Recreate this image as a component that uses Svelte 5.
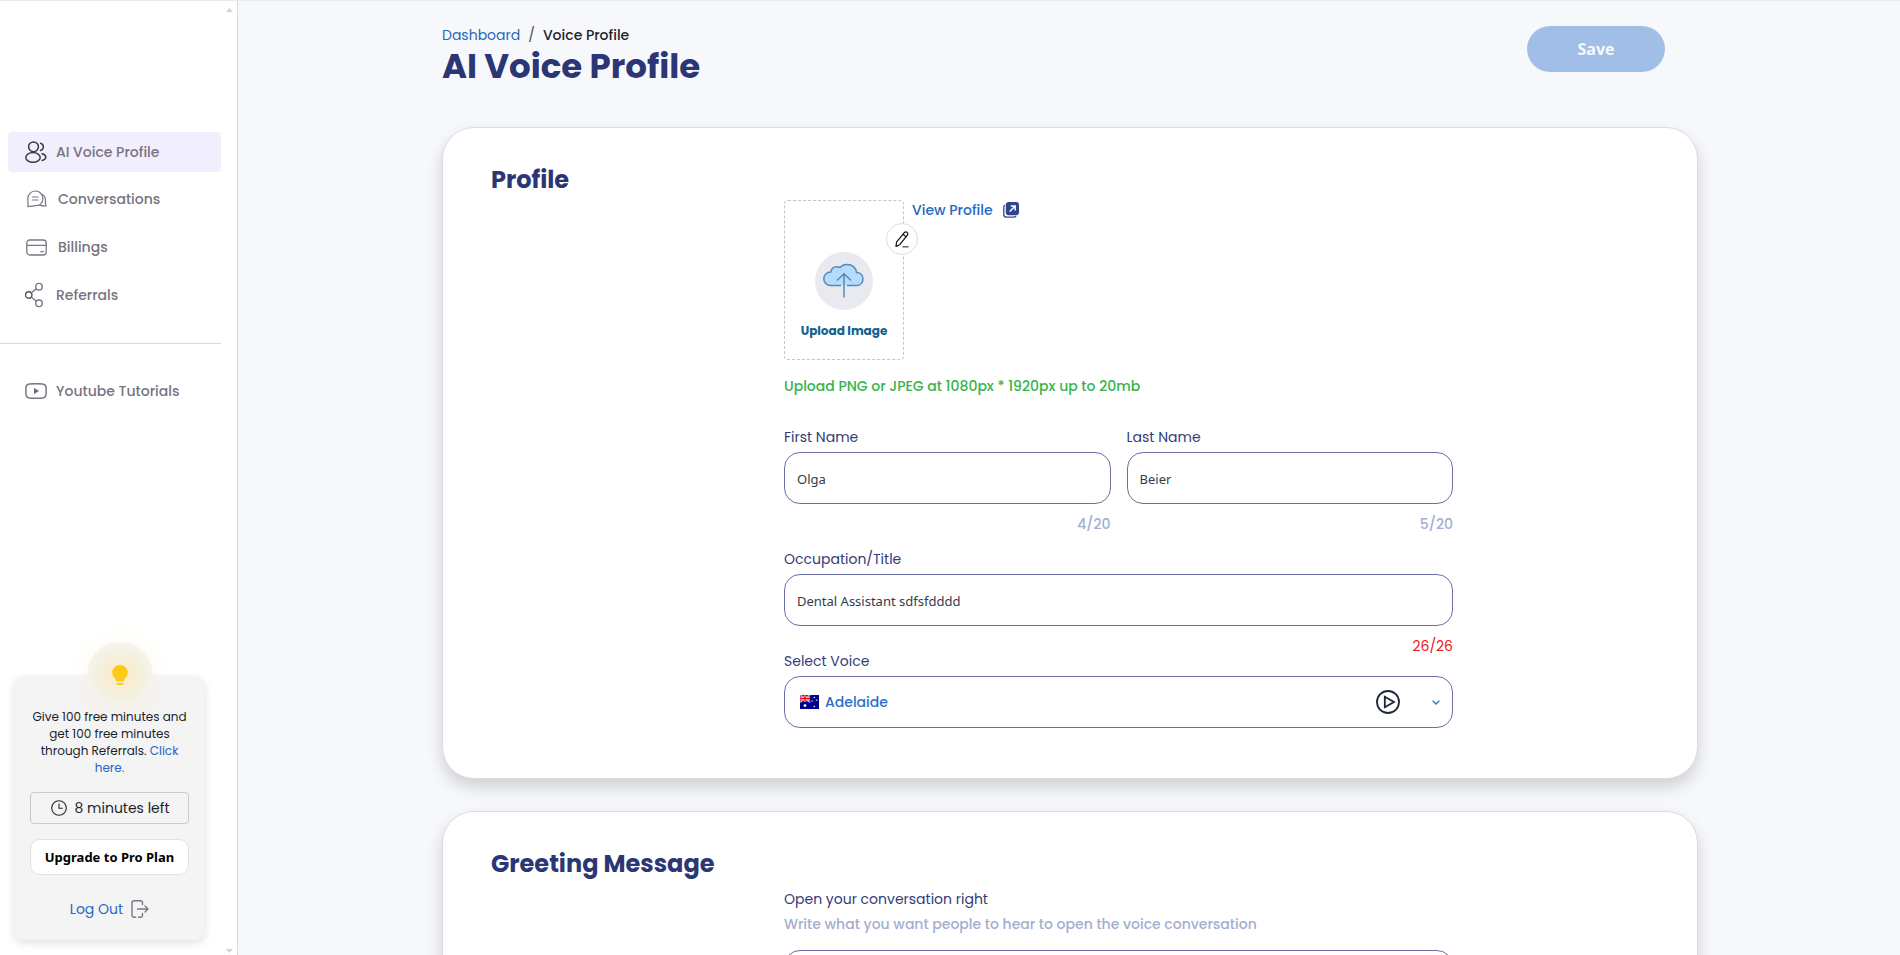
<script>
  let firstName = $state('Olga');
  let lastName = $state('Beier');
  let title = $state('Dental Assistant sdfsfdddd');
  let voice = $state('Adelaide');
  let greeting = $state('');
</script>

<div class="app">
  <aside class="sidebar">
    <div class="side-body">
      <nav class="menu" aria-label="Main">
        <a class="item active" href="#profile">
          <svg width="22" height="22" viewBox="0 0 22 22" fill="none" stroke="#3d3b42" stroke-width="1.5" stroke-linecap="round">
            <circle cx="8.500" cy="5.800" r="4.900" />
            <ellipse cx="8" cy="16.400" rx="7.200" ry="4.800" />
            <path d="M15.600 2.200a3.800 3.800 0 0 1 0 7.300M17 12.700c5 1 5 5.500.2 6.700" />
          </svg>
          <span>AI Voice Profile</span>
        </a>
        <a class="item wide" href="#conversations">
          <svg width="21" height="18" viewBox="0 0 21 18" fill="none" stroke="#7b7786" stroke-width="1.200" stroke-linecap="round" stroke-linejoin="round">
            <path d="M1.800 16.600C2.400 14.500 1.800 12.500 1.800 9A7.600 7.600 0 0 1 9.400 1a7.500 7.500 0 0 1 7.500 7.700c0 4.400-3.100 7-7.200 7-2.700 0-4.600.9-7.900.9z" />
            <path d="M16.400 4.400c4.100 2.300 3.100 6.500 2.900 8.600 0 1.200.8 1.900.8 2.900-2.400.2-4.100.2-6.600-.8M6.400 7h5.600M6.400 10h5.600" />
          </svg>
          <span>Conversations</span>
        </a>
        <a class="item wide" href="#billings">
          <svg width="21" height="17" viewBox="0 0 21 17" fill="none" stroke="#7b7786" stroke-width="1.300" stroke-linecap="round">
            <rect x=".8" y="1" width="19.400" height="15" rx="3" />
            <path d="M1 6.300h19M14.800 12.600h2.600" />
          </svg>
          <span>Billings</span>
        </a>
        <a class="item" href="#referrals">
          <svg width="22" height="26" viewBox="0 0 22 26" fill="none" stroke="#7b7786" stroke-width="1.400">
            <circle cx="3.700" cy="13" r="3.200" stroke="#55515f" />
            <circle cx="14" cy="4.700" r="3.300" />
            <circle cx="14" cy="21.300" r="3.300" />
            <path d="M6.400 10.800l5-4M6.400 15.200l5 4" />
          </svg>
          <span>Referrals</span>
        </a>
      </nav>
      <hr />
      <nav class="menu" aria-label="Help">
        <a class="item" href="#tutorials">
          <svg width="22" height="16" viewBox="0 0 22 16" fill="none" stroke="#7b7786" stroke-width="1.500">
            <path d="M4.500 1C9 .6 13 .6 17.500 1 20 1.200 21 2.600 21.100 5v6c-.1 2.400-1.100 3.800-3.600 4-4.500.4-8.500.4-13 0C2 14.800 1 13.400.9 11V5C1 2.600 2 1.200 4.500 1z" />
            <path d="M9 5v6l5-3z" fill="#6b6776" stroke="none" />
          </svg>
          <span>Youtube Tutorials</span>
        </a>
      </nav>

      <section class="promo">
        <div class="bulb">
          <svg width="16" height="20" viewBox="0 0 16 20" fill="#fcca17">
            <path d="M8 0a7.800 7.800 0 0 0-7.800 7.800c0 3.200 2 4.800 3.400 6.700.5.800.5 1.500.5 2h7.800c0-.5 0-1.200.5-2 1.400-1.900 3.400-3.500 3.400-6.700A7.800 7.800 0 0 0 8 0zM4.300 18h7.400v.8l-.8 1.200H5.100l-.8-1.200z" />
          </svg>
        </div>
        <p>Give 100 free minutes and get 100 free minutes through Referrals. <a href="#referrals">Click here.</a></p>
        <div class="minutes">
          <svg width="16" height="16" viewBox="0 0 16 16" fill="none" stroke="#25262f" stroke-width="1.100">
            <circle cx="8" cy="8" r="7.300" />
            <path d="M8 3.500V8.300h3.800" />
          </svg>
          <span>8 minutes left</span>
        </div>
        <button class="upgrade" type="button">Upgrade to Pro Plan</button>
        <a class="logout" href="#logout">
          <span>Log Out</span>
          <svg width="18" height="18" viewBox="0 0 18 18" fill="none" stroke="#7b7786" stroke-width="1.400" stroke-linecap="round" stroke-linejoin="round">
            <path d="M11.500 4.500V3c0-1.400-.8-2.200-2.200-2.200H3.200C1.800.8 1 1.600 1 3v12c0 1.400.8 2.200 2.200 2.200h1.500M7.500 17.200h1.800c1.400 0 2.200-.8 2.200-2.200v-1.500M6.500 9H17M14 6l3 3-3 3" />
          </svg>
        </a>
      </section>
    </div>
    <div class="rail" aria-hidden="true">
      <svg width="7" height="4" viewBox="0 0 7 4"><path d="M0 4L3.500 0 7 4z" fill="#d2d2d4" /></svg>
      <svg width="7" height="4" viewBox="0 0 7 4"><path d="M0 0h7L3.500 4z" fill="#d2d2d4" /></svg>
    </div>
  </aside>

  <main>
    <div class="container">
      <header>
        <div>
          <div class="crumbs">
            <a href="#dashboard">Dashboard</a><i>/</i><span>Voice Profile</span>
          </div>
          <h1>AI Voice Profile</h1>
        </div>
        <button class="save" type="button">Save</button>
      </header>

      <section class="card">
        <h2>Profile</h2>
        <div class="fields">
          <div class="upload-row">
            <div class="upload">
              <button class="drop" type="button">
                <svg width="58" height="58" viewBox="0 0 58 58" fill="none">
                  <circle cx="29" cy="29" r="29" fill="#e9eaf0" />
                  <path d="M15.500 33.500a6.700 6.700 0 0 1 0-13.400h.3c.4-3.200 2.800-5.400 5.900-5.400 1.200 0 2.300.3 3.200.9 1.700-2 4.400-3.200 7.400-3.200 4.900 0 8.700 3.300 9.200 8h.7a6.600 6.600 0 0 1 0 13.100z" fill="#b5dcff" />
                  <path d="M26 33.500H15.500a6.700 6.700 0 0 1 0-13.400h.3c.4-3.200 2.800-5.400 5.900-5.400 1.200 0 2.300.3 3.200.9 1.700-2 4.400-3.200 7.400-3.200 4.900 0 8.700 3.300 9.200 8h.7a6.600 6.600 0 0 1 0 13.100H32M29 45.500V22M22 28.500l7-6.700 7 6.700" stroke="#568bb3" stroke-width="1.500" />
                </svg>
                <span>Upload Image</span>
              </button>
              <button class="edit" type="button" aria-label="Edit image">
                <svg width="14" height="17" viewBox="0 0 14 17" fill="none" stroke="#111" stroke-width="1.200" stroke-linejoin="round">
                  <path d="M1 15.500l.5-4.300L9.300 1.700c.9-1 2-1 2.800-.3.900.8.900 1.900.1 2.900L4.600 13.800zM8 3.300l3.100 2.600" />
                  <path d="M7.500 15.800h6" stroke="#666" stroke-width="1.500" />
                </svg>
              </button>
            </div>
            <a class="view" href="#view">
              <span>View Profile</span>
              <svg width="16" height="16" viewBox="0 0 16 16" fill="none">
                <path d="M2 3.200C1 3.600.8 4.300.8 5.200v7.200c0 1.800 1 2.800 2.800 2.800h7.200c1 0 1.800-.3 2.200-1.200" stroke="#2f458c" stroke-width="1.300" />
                <rect x="2.800" y="0" width="13.200" height="13.200" rx="3" fill="#2f458c" />
                <path d="M6.700 9.500l5-5M7.700 4h4.500v4.500" stroke="#fff" stroke-width="1.500" />
              </svg>
            </a>
          </div>
          <p class="hint">Upload PNG or JPEG at 1080px * 1920px up to 20mb</p>

          <div class="names">
            <div class="field">
              <label for="first">First Name</label>
              <input id="first" type="text" maxlength="20" bind:value={firstName} />
              <span class="count">{firstName.length}/20</span>
            </div>
            <div class="field">
              <label for="last">Last Name</label>
              <input id="last" type="text" maxlength="20" bind:value={lastName} />
              <span class="count">{lastName.length}/20</span>
            </div>
          </div>
          <div class="field occupation">
            <label for="title">Occupation/Title</label>
            <input id="title" type="text" maxlength="26" bind:value={title} />
            <span class="count" class:full={title.length >= 26}>{title.length}/26</span>
          </div>
          <div class="field">
            <label for="voice">Select Voice</label>
            <div class="voice">
              <svg width="19" height="14" viewBox="0 0 19 14">
                <rect width="19" height="14" fill="#00008b" />
                <path d="M0 0l10 7M10 0L0 7" stroke="#fff" stroke-width="1.600" />
                <path d="M0 0l10 7M10 0L0 7" stroke="#f00" stroke-width=".7" />
                <path d="M5 0v7M0 3.500h10" stroke="#fff" stroke-width="2.400" />
                <path d="M5 0v7M0 3.500h10" stroke="#f00" stroke-width="1.400" />
                <g fill="#fff">
                  <circle cx="5" cy="10.600" r="1.400" />
                  <circle cx="14.300" cy="2.500" r=".7" />
                  <circle cx="12" cy="6" r=".7" />
                  <circle cx="16.700" cy="5.200" r=".7" />
                  <circle cx="14.300" cy="11.500" r=".8" />
                </g>
              </svg>
              <select id="voice" bind:value={voice}>
                <option>Adelaide</option>
              </select>
              <button class="play" type="button" aria-label="Play voice">
                <svg width="24" height="24" viewBox="0 0 24 24" fill="none" stroke="#1c2733" stroke-width="1.800">
                  <circle cx="12" cy="12" r="11" />
                  <path d="M8.800 6.800v10.400L18 12z" />
                </svg>
              </button>
              <svg width="8" height="5" viewBox="0 0 8 5" fill="none" stroke="#2a6fc9" stroke-width="1.300"><path d="M.6.600L4 4 7.400.600" /></svg>
            </div>
          </div>
        </div>
      </section>

      <section class="card">
        <h2>Greeting Message</h2>
        <div class="fields greeting">
          <label for="greeting">Open your conversation right</label>
          <p>Write what you want people to hear to open the voice conversation</p>
          <textarea id="greeting" rows="4" bind:value={greeting}></textarea>
        </div>
      </section>
    </div>
  </main>
</div>

<style>
  :global(body) {
    margin: 0;
    background: #f7f8fc;
  }
  * {
    box-sizing: border-box;
  }
  .app {
    display: flex;
    height: 100vh;
    border-top: 1px solid #eaebef;
    font-family: Poppins, Inter, sans-serif;
    font-size: 14px;
    font-weight: 500;
    line-height: 20px;
    color: #1d1f2b;
  }
  a {
    color: #2767c0;
    text-decoration: none;
  }
  button,
  select,
  input,
  textarea {
    font: inherit;
    color: inherit;
    margin: 0;
    outline: none;
  }
  button {
    cursor: pointer;
    padding: 0;
  }
  svg {
    flex: none;
    display: block;
  }
  p,
  h1,
  h2 {
    margin: 0;
  }

  .sidebar {
    flex: none;
    display: flex;
    width: 238px;
    background: #fff;
    border-right: 1px solid #d9dbe0;
  }
  .side-body {
    flex: 1;
    display: flex;
    flex-direction: column;
    padding-top: 131px;
  }
  .rail {
    width: 16px;
    padding: 7px 0 2px 5px;
    display: flex;
    flex-direction: column;
    justify-content: space-between;
  }
  .menu {
    display: flex;
    flex-direction: column;
    gap: 8px;
    padding-left: 8px;
  }
  .item {
    display: flex;
    align-items: center;
    gap: 9px;
    height: 40px;
    padding-left: 17px;
    border-radius: 4px;
    color: #77737f;
  }
  .item.wide {
    padding-left: 18px;
    gap: 11px;
  }
  .item.active {
    margin-bottom: -1px;
    background: #f1eefd;
  }
  hr {
    width: 100%;
    margin: 28px 0 27px;
    border: 0;
    border-top: 1px solid #dadadd;
  }

  .promo {
    display: flex;
    flex-direction: column;
    align-items: stretch;
    margin: auto 16px 15px 14px;
    padding: 0 16px 21px;
    border-radius: 10px;
    background: #f4f4f4;
    box-shadow: 0 3px 8px rgba(0, 0, 0, 0.12);
    text-align: center;
  }
  .bulb {
    align-self: center;
    display: flex;
    align-items: center;
    justify-content: center;
    width: 66px;
    height: 66px;
    margin: -34px 0 0 20px;
    border-radius: 50%;
    background: radial-gradient(closest-side, #faecc0 0%, #f5f0dd 65%, #f4f3ee 100%);
    box-shadow: 0 0 24px rgba(252, 202, 23, 0.09);
  }
  .promo p {
    font-size: 12px;
    line-height: 17px;
    font-weight: 400;
  }
  .minutes {
    display: flex;
    align-items: center;
    justify-content: center;
    gap: 7px;
    height: 32px;
    margin-top: 16px;
    padding-left: 2px;
    border: 1px solid #c9cacc;
    border-radius: 4px;
    font-weight: 400;
  }
  .upgrade {
    height: 36px;
    margin-top: 15px;
    border: 1px solid #dde2ea;
    border-radius: 10px;
    background: #fff;
    color: #000;
    font-family: "Noto Sans", sans-serif;
    font-size: 13px;
    font-weight: 700;
  }
  .logout {
    display: flex;
    justify-content: center;
    align-items: center;
    gap: 8px;
    margin-top: 24px;
    font-weight: 400;
  }

  main {
    flex: 1;
    overflow-y: auto;
    padding-left: 2px;
    scrollbar-width: none;
  }
  .container {
    max-width: 1256px;
    margin: 0 auto;
    padding-bottom: 32px;
  }
  header {
    display: flex;
    justify-content: space-between;
    align-items: flex-start;
    padding: 24px 33px 41px 0;
  }
  .crumbs {
    display: flex;
    gap: 8px;
    color: #1d1f2b;
  }
  .crumbs a {
    font-weight: 400;
  }
  .crumbs i {
    font-style: normal;
    font-weight: 400;
    color: #4c4f58;
  }
  h1 {
    margin-top: 1px;
    font-size: 34px;
    line-height: 40px;
    font-weight: 700;
    color: #2b3674;
  }
  .save {
    width: 138px;
    height: 46px;
    margin-top: 1px;
    border: 0;
    border-radius: 23px;
    background: #a1bfe6;
    color: #f6f9fd;
    font-family: "Open Sans", sans-serif;
    font-size: 16px;
    font-weight: 700;
  }
  .card {
    min-height: 652px;
    margin-bottom: 32px;
    padding: 34px 48px 49px;
    border: 1px solid #dadde2;
    border-radius: 32px;
    background: #fff;
    box-shadow: 0 8px 16px rgba(0, 0, 0, 0.16);
  }
  h2 {
    font-size: 24px;
    line-height: 36px;
    font-weight: 700;
    color: #2b3674;
  }
  .fields {
    max-width: 962px;
    margin-top: 2px;
    padding-left: 293px;
  }
  .upload-row {
    display: flex;
    gap: 8px;
  }
  .upload {
    position: relative;
  }
  .drop {
    display: flex;
    flex-direction: column;
    align-items: center;
    gap: 12px;
    width: 120px;
    height: 160px;
    padding-top: 51px;
    border: 1px dashed #c4c5c8;
    border-radius: 4px;
    background: #fff;
    color: #0d628f;
    font-size: 12px;
    line-height: 18px;
    font-weight: 700;
  }
  .edit {
    position: absolute;
    top: 23px;
    right: -14px;
    display: flex;
    align-items: center;
    justify-content: center;
    width: 32px;
    height: 32px;
    border: 1px solid #dedee2;
    border-radius: 50%;
    background: #fff;
  }
  .view {
    display: flex;
    align-items: center;
    gap: 10px;
    height: 20px;
  }
  .hint {
    margin-top: 16px;
    color: #35b44b;
  }
  .names {
    display: grid;
    grid-template-columns: 1fr 1fr;
    gap: 16px;
    margin-top: 31px;
  }
  .field {
    display: flex;
    flex-direction: column;
  }
  .field label {
    margin-bottom: 5px;
  }
  label {
    color: #333b78;
    font-weight: 400;
  }
  input,
  textarea,
  .voice {
    width: 100%;
    height: 52px;
    padding: 0 12px;
    border: 1px solid #6a70a6;
    border-radius: 16px;
    background: #fff;
  }
  input {
    padding-top: 2px;
    font-family: "Noto Sans", sans-serif;
    font-size: 13px;
    font-weight: 400;
    color: #343c48;
  }
  .count {
    align-self: flex-end;
    margin-top: 10px;
    color: #a3aed0;
  }
  .count.full {
    color: #f21616;
    font-weight: 400;
  }
  .occupation {
    margin: 15px 0 -5px;
  }
  .voice {
    display: flex;
    align-items: center;
    padding: 0 12px 0 15px;
  }
  select {
    flex: 1;
    appearance: none;
    padding: 0 6px;
    border: 0;
    background: none;
    color: #2a6fc9;
  }
  .play {
    margin-right: 32px;
    border: 0;
    background: none;
  }
  .greeting {
    display: flex;
    flex-direction: column;
    gap: 5px;
  }
  .greeting label {
    margin-top: 5px;
  }
  .greeting p {
    color: #a3aed0;
  }
  textarea {
    height: 120px;
    margin-top: 11px;
    padding: 12px;
    resize: none;
  }
</style>
